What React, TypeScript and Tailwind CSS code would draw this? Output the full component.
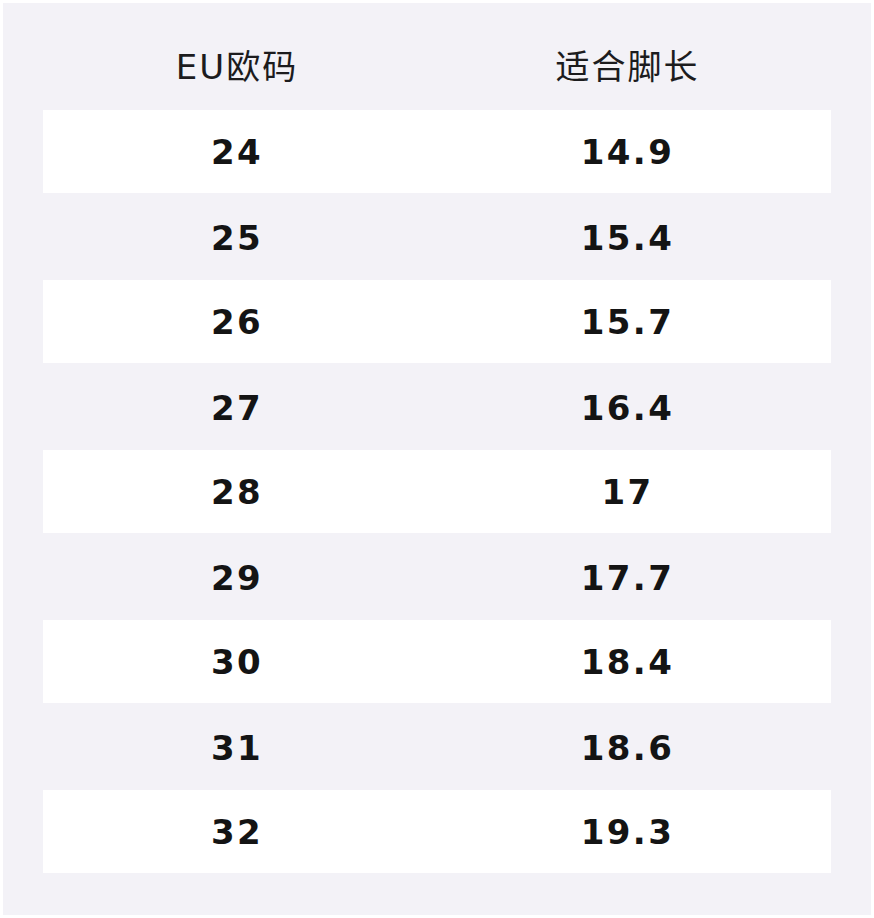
const ROWS: [string, string][] = [
  ["24", "14.9"],
  ["25", "15.4"],
  ["26", "15.7"],
  ["27", "16.4"],
  ["28", "17"],
  ["29", "17.7"],
  ["30", "18.4"],
  ["31", "18.6"],
  ["32", "19.3"],
];

const App = () => {
  return (
    <div className="w-[874px] h-[918px] bg-white p-[3px]">
      <div className="h-full bg-[#f3f2f7] pt-[22px] px-[40px] pb-[40px] flex flex-col">
        <div className="h-[85px] grid grid-cols-[388px_393px] items-center text-[34px] tracking-[0.06em] text-[#1c1c1e] font-['DejaVu_Sans','Noto_Sans_CJK_SC',sans-serif]">
          <span className="text-center">EU欧码</span>
          <span className="text-center">适合脚长</span>
        </div>
        {ROWS.map(([eu, len], i) => (
          <div
            key={eu}
            className={
              i % 2 === 0
                ? "h-[85px] grid grid-cols-[388px_393px] items-center pt-[2px] bg-white border-b-2 border-[#f3f2f7]"
                : "h-[85px] grid grid-cols-[388px_393px] items-center pt-[2px]"
            }
          >
            <span className="text-center text-[34px] font-bold tracking-[0.07em] text-[#141414] font-['DejaVu_Sans',sans-serif]">
              {eu}
            </span>
            <span className="text-center text-[34px] font-bold tracking-[0.07em] text-[#141414] font-['DejaVu_Sans',sans-serif]">
              {len}
            </span>
          </div>
        ))}
      </div>
    </div>
  );
};

export default App;
